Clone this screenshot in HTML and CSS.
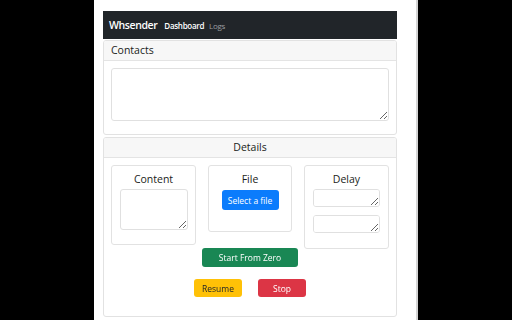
FILE: index.html
```html
<!DOCTYPE html>
<html>
<head>
<meta charset="utf-8">
<link rel="stylesheet" href="styles.css">
</head>
<body>
<div class="page">
  <div class="container">
    <nav class="navbar">
      <span class="brand">Whsender</span>
      <span class="nav-link active">Dashboard</span>
      <span class="nav-link">Logs</span>
    </nav>
    <section class="card">
      <div class="card-header">Contacts</div>
      <div class="card-body contacts-body">
        <textarea class="contacts-input"></textarea>
      </div>
    </section>
    <section class="card details">
      <div class="card-header center">Details</div>
      <div class="card-body details-body">
        <div class="cols">
          <div class="inner content-card">
            <div class="inner-title">Content</div>
            <textarea class="content-input"></textarea>
          </div>
          <div class="inner file-card">
            <div class="inner-title">File</div>
            <button class="btn btn-blue">Select a file</button>
          </div>
          <div class="inner delay-card">
            <div class="inner-title">Delay</div>
            <textarea class="delay-input"></textarea>
            <textarea class="delay-input"></textarea>
          </div>
        </div>
        <div class="row-center">
          <button class="btn btn-green">Start From Zero</button>
        </div>
        <div class="row-center pair">
          <button class="btn btn-yellow">Resume</button>
          <button class="btn btn-red">Stop</button>
        </div>
      </div>
    </section>
  </div>
</div>
</body>
</html>
```
FILE: styles.css
```css
* { box-sizing: border-box; }
html, body { margin: 0; padding: 0; background: #000; height: 100%; overflow: hidden; }
body { font-family: "Open Sans", "Noto Sans", sans-serif; color: #212529; }
.page {
  margin-left: 94px;
  width: 324px;
  height: 320px;
  background: #fff;
  border-right: 2px solid #d4d4d4;
  padding: 11px 19px 0 9px;
}
.container { width: 294px; }
.navbar {
  height: 28px;
  background: #212529;
  display: flex;
  align-items: center;
  padding-left: 6px;
  gap: 5px;
}
.brand { color: #fff; font-size: 10.5px; font-weight: 600; margin-right: 2px; letter-spacing: -0.4px; }
.nav-link { color: #9a9da0; font-size: 8px; letter-spacing: -0.3px; }
.nav-link.active { color: #fff; font-weight: 600; }
.card {
  border: 1px solid #e2e2e2;
  border-radius: 3px;
  overflow: hidden;
  margin-top: 1px;
}
.card.details { margin-top: 2px; }
.card-header {
  height: 20px;
  background: #f7f7f7;
  border-bottom: 1px solid #e4e4e4;
  font-size: 10.5px;
  font-weight: 500;
  line-height: 19px;
  padding-left: 7px;
  color: #1a1d20;
}
.card-header.center { text-align: center; padding-left: 0; }
.card-body { padding: 7px 7px 0; }
.contacts-body { padding-bottom: 13px; }
textarea {
  display: block;
  border: 1px solid #e0e0e0;
  border-radius: 3px;
  margin: 0;
  padding: 0;
  font: inherit;
}
.contacts-input { width: 278px; height: 53px; }
.cols {
  display: grid;
  grid-template-columns: 85px 84px 85px;
  column-gap: 12px;
  align-items: start;
}
.inner {
  border: 1px solid #e2e2e2;
  border-radius: 3px;
  padding: 6px 8px 0;
  display: flex;
  flex-direction: column;
  align-items: center;
}
.inner-title { font-size: 10.5px; font-weight: 500; line-height: 14px; margin-bottom: 2px; color: #1a1d20; }
.content-card { height: 80px; }
.content-input { width: 68px; height: 41px; margin-top: 1px; }
.file-card { height: 67px; }
.delay-card { height: 84px; margin-bottom: -4px; }
.delay-input { width: 67px; height: 18px; margin-top: 1px; }
.delay-input + .delay-input { margin-top: 8px; }
.btn {
  border: none;
  border-radius: 3px;
  font-family: inherit;
  font-size: 8.5px;
  color: #fff;
  padding: 0;
  cursor: pointer;
}
.btn-blue { background: #0b7cfc; width: 57px; height: 20px; margin-top: 2px; }
.btn-green { background: #198754; width: 96px; height: 19px; }
.btn-yellow { background: #ffc107; color: #212529; width: 48px; height: 18px; }
.btn-red { background: #dc3545; width: 48px; height: 18px; }
.row-center { display: flex; justify-content: center; margin-top: 3px; }
.row-center.pair { gap: 16px; margin-top: 12px; padding-bottom: 19px; }
```
